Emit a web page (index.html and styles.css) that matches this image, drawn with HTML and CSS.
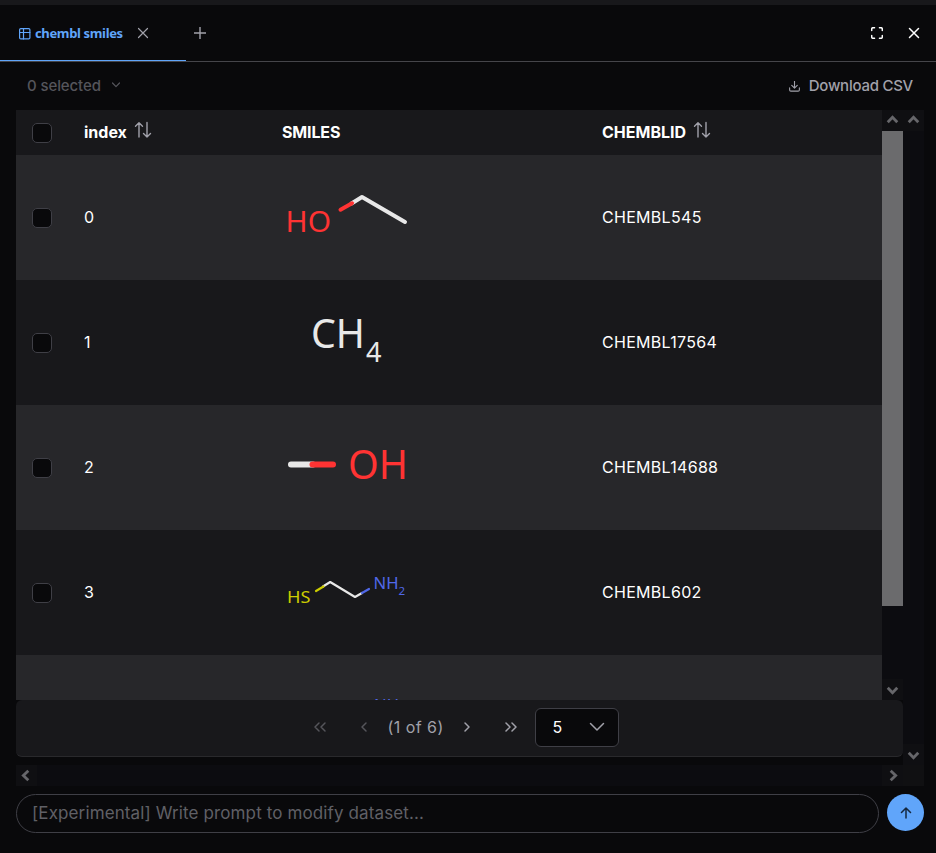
FILE: index.html
```html
<!DOCTYPE html>
<html lang="en">
<head>
<meta charset="utf-8">
<title>chembl smiles</title>
<link rel="stylesheet" href="styles.css">
</head>
<body>
<svg class="defs" width="0" height="0" aria-hidden="true">
  <symbol id="sort" viewBox="0 0 18 18"><path d="M5 16V2M1.500 5.200 5 1.700l3.500 3.500M13 1.500V16M9.500 12.500 13 16l3.500-3.500"/></symbol>
  <symbol id="x" viewBox="0 0 12 12"><path d="M1.500 1.500l9 9M10.500 1.500l-9 9"/></symbol>
  <symbol id="arrow" viewBox="0 0 12 12"><path d="M1.600 8.600 6 4l4.400 4.600"/></symbol>
</svg>
<header class="tabs">
  <div class="tab">
    <svg class="grid-icon" viewBox="0 0 12 12"><rect x=".6" y=".6" width="10.300" height="10.300" rx="1.200"/><path d="M.6 4.500h10.300M4.500.6v10.300"/></svg>
    <span class="tab-title">chembl smiles</span>
    <svg class="tab-close"><use href="#x"/></svg>
  </div>
  <svg class="plus" viewBox="0 0 12 12"><path d="M6 0v12M0 6h12"/></svg>
  <div class="window-actions">
    <svg class="expand" viewBox="0 0 12 12"><path d="M.7 3.500V2Q.7.7 2 .7h1.500M8.500.7H10q1.300 0 1.300 1.300v1.500M11.300 8.500V10q0 1.300-1.300 1.300H8.500M3.500 11.300H2Q.7 11.300.7 10V8.500"/></svg>
    <svg class="close"><use href="#x"/></svg>
  </div>
</header>
<div class="toolbar">
  <div class="selected"><span class="selected-label">0 selected</span><svg class="chev" viewBox="0 0 10 10"><path d="M1.500 3 5 6.600 8.500 3"/></svg></div>
  <div class="download"><svg class="download-icon" viewBox="0 0 12 12"><path d="M6 0v7.500M3 4.800l3 3 3-3M.7 7.500v2.200q0 1.300 1.300 1.300h8q1.300 0 1.300-1.300V7.500"/></svg><span class="download-label">Download CSV</span></div>
</div>
<main class="panel">
  <div class="content">
    <div class="scroll-row">
      <div class="table-view">
        <table>
          <colgroup><col class="c-check"><col class="c-index"><col class="c-smiles"><col class="c-id"></colgroup>
          <thead><tr>
            <th><i class="check"></i></th>
            <th><span class="h-index">index</span><svg class="sort"><use href="#sort"/></svg></th>
            <th><span class="h-smiles">SMILES</span></th>
            <th><span class="h-id">CHEMBLID</span><svg class="sort"><use href="#sort"/></svg></th>
          </tr></thead>
          <tbody>
            <tr><td><i class="check"></i></td><td>0</td><td>
              <svg class="mol" viewBox="0 0 130 93"><g stroke-width="4"><path class="c" d="M69.500 32.500 80 26l43 25"/><path class="o" d="M58.500 38.700 70 32.300"/></g><text class="fo" x="3.500" y="61" font-size="28.500" textLength="45.500" lengthAdjust="spacingAndGlyphs">HO</text></svg>
            </td><td><span class="id">CHEMBL545</span></td></tr>
            <tr><td><i class="check"></i></td><td>1</td><td>
              <svg class="mol" viewBox="0 0 130 93"><text class="fc" x="29" y="52" font-size="40" textLength="54" lengthAdjust="spacingAndGlyphs">CH</text><text class="fc" x="84" y="65.500" font-size="27">4</text></svg>
            </td><td><span class="id">CHEMBL17564</span></td></tr>
            <tr><td><i class="check"></i></td><td>2</td><td>
              <svg class="mol" viewBox="0 0 130 93"><g stroke-width="6"><path class="c" d="M9 43.500h22"/><path class="o" d="M30.500 43.500H51"/></g><text class="fo" x="66" y="58" font-size="40" textLength="60" lengthAdjust="spacingAndGlyphs">OH</text></svg>
            </td><td><span class="id">CHEMBL14688</span></td></tr>
            <tr><td><i class="check"></i></td><td>3</td><td>
              <svg class="mol" viewBox="0 0 130 93"><g stroke-width="2.200"><path class="c" d="M41 40.500 48.200 36l24.800 15 7-4"/><path class="s" d="M34 45l7.500-4.500"/><path class="n" d="M80 47l7-4"/></g><text class="fs" x="5" y="57" font-size="17" textLength="23.500" lengthAdjust="spacingAndGlyphs">HS</text><text class="fn" x="91.500" y="42.500" font-size="17" textLength="25" lengthAdjust="spacingAndGlyphs">NH</text><text class="fn" x="116.500" y="48.500" font-size="11.500">2</text></svg>
            </td><td><span class="id">CHEMBL602</span></td></tr>
            <tr><td></td><td></td><td>
              <svg class="mol" viewBox="0 0 130 93"><text class="fn" x="92" y="40" font-size="17" textLength="25" lengthAdjust="spacingAndGlyphs">NH</text></svg>
            </td><td></td></tr>
          </tbody>
        </table>
      </div>
      <div class="vbar"><svg class="arr"><use href="#arrow"/></svg><div class="thumb"></div><svg class="arr down"><use href="#arrow"/></svg></div>
    </div>
    <nav class="pager">
      <svg class="pg off" viewBox="0 0 14 12"><path d="M6 2 2 6l4 4M12 2 8 6l4 4"/></svg>
      <svg class="pg off" viewBox="0 0 14 12"><path d="M9 2 5 6l4 4"/></svg>
      <span class="page">(1 of 6)</span>
      <svg class="pg" viewBox="0 0 14 12"><path d="M5 2l4 4-4 4"/></svg>
      <svg class="pg" viewBox="0 0 14 12"><path d="M2 2l4 4-4 4M8 2l4 4-4 4"/></svg>
      <div class="select"><span>5</span><svg viewBox="0 0 16 10"><path d="M1.500 1.500 8 8l6.500-6.500"/></svg></div>
    </nav>
  </div>
  <div class="vbar outer"><svg class="arr"><use href="#arrow"/></svg><svg class="arr down"><use href="#arrow"/></svg></div>
  <div class="hbar"><svg class="arr left"><use href="#arrow"/></svg><svg class="arr right"><use href="#arrow"/></svg></div>
  <div class="corner"></div>
</main>
<footer class="prompt">
  <div class="input"><span class="placeholder">[Experimental] Write prompt to modify dataset...</span></div>
  <button class="send" aria-label="Send"><svg viewBox="0 0 12 12"><path d="M6 11V1M1.500 5.500 6 1l4.500 4.500"/></svg></button>
</footer>
</body>
</html>
```
FILE: styles.css
```css
* { box-sizing: border-box; }
body { margin: 0; width: 936px; height: 853px; overflow: hidden; background: #09090b; color: #fff; font: 16px Inter, "Liberation Sans", sans-serif; border-top: 5px solid #18181b; }
svg { fill: none; stroke: currentColor; stroke-width: 1.200; stroke-linecap: round; stroke-linejoin: round; flex: none; display: block; }
.defs { position: absolute; }
.tabs { height: 57px; display: flex; align-items: center; border-bottom: 1px solid #45454a; }
.tab { width: 186px; height: 57px; margin-bottom: -1px; padding: 0 0 1px 19px; display: flex; align-items: center; color: #60a5fa; background: linear-gradient(#60a5fa, #60a5fa) 0 55px / 100% 1px no-repeat; }
.grid-icon { width: 12px; height: 12px; margin-top: 2px; }
.tab-title { font: bold 13px "Noto Sans", sans-serif; margin-left: 4px; width: 88px; white-space: nowrap; letter-spacing: -0.350px; }
.tab-close { width: 12px; height: 12px; margin-left: 14px; color: #a1a1aa; }
.plus { width: 12px; height: 12px; margin-left: 8px; color: #a1a1aa; stroke-width: 1.400; }
.window-actions { margin-left: auto; display: flex; gap: 25px; padding-right: 16px; }
.window-actions svg { width: 12px; height: 12px; stroke-width: 1.500; }
.toolbar { height: 48px; padding: 0 23px 2px 27px; display: flex; align-items: center; justify-content: space-between; font-size: 15px; font-weight: 500; }
.selected { display: flex; align-items: center; gap: 10px; color: #55555b; letter-spacing: -0.100px; }
.download { display: flex; align-items: center; gap: 9px; color: #a1a1aa; letter-spacing: -0.250px; }
.chev { width: 10px; height: 10px; }
.download-icon { width: 11px; height: 11px; margin-top: 2px; }
.panel { margin: 0 12px 0 16px; height: 676px; display: grid; grid-template: 655px 21px / 887px 21px; }
.scroll-row { height: 590px; display: flex; }
.table-view { width: 866px; overflow: hidden; background: #18181b; }
table { width: 866px; table-layout: fixed; border-collapse: collapse; }
.c-check { width: 52px; }
.c-index { width: 198px; }
.c-smiles { width: 320px; }
.c-id { width: 296px; }
th, td { padding: 0 16px 2px; text-align: left; white-space: nowrap; vertical-align: middle; }
th { height: 45px; }
td { height: 125px; }
td:first-child, th:first-child { padding: 0 16px; }
td:nth-child(3) { padding-bottom: 0; }
tbody tr:nth-child(odd) { background: #27272a; }
.check { display: block; width: 20px; height: 20px; border: 1px solid #3f3f46; border-radius: 5px; background: #09090b; }
.id { letter-spacing: 0.300px; }
.h-smiles { letter-spacing: -0.150px; }
.sort { display: inline-block; width: 18px; height: 18px; margin-left: 7px; vertical-align: -1px; color: #a1a1aa; stroke-width: 1.400; }
.mol { width: 130px; height: 93px; }
.mol text { stroke: none; font-family: "Noto Sans", sans-serif; }
.c { stroke: #e8e8e8; } .o { stroke: #ff3333; } .s { stroke: #cccc00; } .n { stroke: #5068e8; }
.fc { fill: #e8e8e8; } .fo { fill: #ff3333; } .fs { fill: #cccc00; } .fn { fill: #5068e8; }
.vbar { width: 21px; display: flex; flex-direction: column; background: #0c0c10; }
.arr { width: 21px; height: 21px; padding: 3px 4px 5px; color: #66666a; background: #0f0f12; stroke-width: 2.600; stroke-linecap: butt; stroke-linejoin: miter; }
.down { transform: rotate(180deg); margin-top: auto; }
.left { transform: rotate(-90deg); }
.right { transform: rotate(90deg); }
.thumb { height: 475px; background: #6b6b6d; }
.hbar { display: flex; justify-content: space-between; background: #0c0c10; }
.corner { background: #101012; }
.pager { height: 57px; display: flex; align-items: center; justify-content: center; background: #18181b; border-bottom: 1px solid #29292c; border-radius: 6px; color: #a1a1aa; padding: 0 3px 2px 0; }
.pg { width: 14px; height: 12px; margin: 0 15px; stroke-width: 1.500; }
.off { color: #55555b; }
.page { width: 59px; padding-left: 2px; white-space: nowrap; letter-spacing: 0.450px; }
.select { width: 84px; height: 39px; margin-left: 2px; padding: 0 13px 0 17px; display: flex; align-items: center; justify-content: space-between; background: #09090b; border: 1px solid #3f3f46; border-radius: 6px; }
.select span { color: #fff; }
.select svg { width: 16px; height: 10px; stroke-width: 1.500; }
.prompt { display: flex; gap: 8px; padding: 8px 12px 0 16px; }
.input { width: 863px; height: 39px; border: 1px solid #3f3f46; border-radius: 20px; display: flex; align-items: center; padding: 0 0 2px 15px; color: #606066; font-size: 17px; letter-spacing: 0.120px; }
.send { width: 37px; height: 37px; padding: 0; border: 0; border-radius: 50%; background: #60a5fa; color: #15283f; display: grid; place-items: center; }
.send svg { width: 12px; height: 12px; stroke-width: 1.500; }
```
